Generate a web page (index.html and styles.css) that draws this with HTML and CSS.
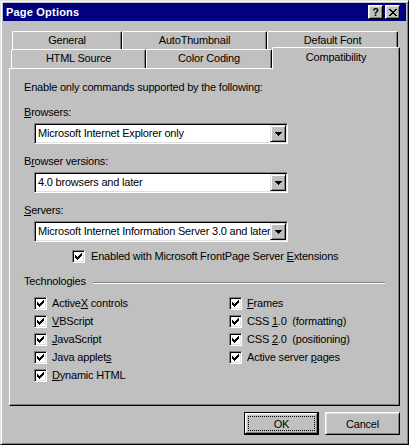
FILE: index.html
```html
<!DOCTYPE html>
<html>
<head>
    <title>Page Options</title>
    <link rel="stylesheet" href="styles.css">
</head>
<body>
<div class="window">
    <div class="title-bar">
        <span class="title">Page Options</span>
        <div class="title-buttons">
            <button class="title-btn help">?</button>
            <button class="title-btn close">
                <svg width="8" height="7" viewBox="0 0 8 7" shape-rendering="crispEdges">
                    <path d="M0 0h2v1h-2z M6 0h2v1h-2z M1 1h2v1h-2z M5 1h2v1h-2z M2 2h4v1h-4z M3 3h2v1h-2z M2 4h4v1h-4z M1 5h2v1h-2z M5 5h2v1h-2z M0 6h2v1h-2z M6 6h2v1h-2z" fill="#000"/>
                </svg>
            </button>
        </div>
    </div>

    <div class="dialog-body">
        <div class="tabs">
            <div class="tab-row back">
                <div class="tab tab-general">General</div>
                <div class="tab tab-thumb">AutoThumbnail</div>
                <div class="tab tab-font">Default Font</div>
            </div>
            <div class="tab-row front">
                <div class="tab tab-source">HTML Source</div>
                <div class="tab tab-color">Color Coding</div>
                <div class="tab tab-compat selected">Compatibility</div>
            </div>
        </div>

        <div class="panel">
            <p class="intro">Enable only commands supported by the following:</p>

            <div class="field-label"><u>B</u>rowsers:</div>
            <div class="select">
                <span class="select-value">Microsoft Internet Explorer only</span>
                <span class="select-arrow">
                    <svg width="7" height="4" viewBox="0 0 7 4" shape-rendering="crispEdges"><path d="M0 0h7v1h-1v1h-1v1h-1v1h-1v-1h-1v-1h-1v-1h-1z" fill="#000"/></svg>
                </span>
            </div>

            <div class="field-label">B<u>r</u>owser versions:</div>
            <div class="select">
                <span class="select-value">4.0 browsers and later</span>
                <span class="select-arrow">
                    <svg width="7" height="4" viewBox="0 0 7 4" shape-rendering="crispEdges"><path d="M0 0h7v1h-1v1h-1v1h-1v1h-1v-1h-1v-1h-1v-1h-1z" fill="#000"/></svg>
                </span>
            </div>

            <div class="field-label"><u>S</u>ervers:</div>
            <div class="select">
                <span class="select-value">Microsoft Internet Information Server 3.0 and later</span>
                <span class="select-arrow">
                    <svg width="7" height="4" viewBox="0 0 7 4" shape-rendering="crispEdges"><path d="M0 0h7v1h-1v1h-1v1h-1v1h-1v-1h-1v-1h-1v-1h-1z" fill="#000"/></svg>
                </span>
            </div>

            <div class="check server-ext">
                <span class="box checked"></span>
                <span>Enabled with Microsoft FrontPage Server <u>E</u>xtensions</span>
            </div>

            <div class="group-title">
                <span>Technologies</span>
                <span class="rule"></span>
            </div>

            <div class="tech-grid">
                <div class="check"><span class="box checked"></span><span>Active<u>X</u> controls</span></div>
                <div class="check"><span class="box checked"></span><span><u>V</u>BScript</span></div>
                <div class="check"><span class="box checked"></span><span><u>J</u>avaScript</span></div>
                <div class="check"><span class="box checked"></span><span>Java applet<u>s</u></span></div>
                <div class="check"><span class="box checked"></span><span><u>D</u>ynamic HTML</span></div>
                <div class="check"><span class="box checked"></span><span><u>F</u>rames</span></div>
                <div class="check"><span class="box checked"></span><span class="pre">CSS <u>1</u>.0  (formatting)</span></div>
                <div class="check"><span class="box checked"></span><span class="pre">CSS <u>2</u>.0  (positioning)</span></div>
                <div class="check"><span class="box checked"></span><span>Active server <u>p</u>ages</span></div>
            </div>
        </div>

        <div class="dialog-buttons">
            <button class="btn default"><span class="focus">OK</span></button>
            <button class="btn">Cancel</button>
        </div>
    </div>
</div>
</body>
</html>
```

FILE: styles.css
```css
* {
    margin: 0;
    padding: 0;
    box-sizing: border-box;
}

body {
    font-family: 'Liberation Sans', Arial, sans-serif;
    font-size: 11px;
    letter-spacing: -0.2px;
    color: #000;
    background: #c0c0c0;
}

.window {
    width: 409px;
    height: 445px;
    background: #c0c0c0;
    border: 1px solid;
    border-color: #dfdfdf #000 #000 #dfdfdf;
    box-shadow: inset 1px 1px #fff, inset -1px -1px #808080;
    padding: 2px;
    display: flex;
    flex-direction: column;
}

.title-bar {
    height: 18px;
    background: #000080;
    display: flex;
    align-items: center;
    padding: 0 6px 0 3px;
}

.title {
    flex: 1;
    color: #fff;
    font-weight: bold;
    font-size: 11px;
    letter-spacing: 0.2px;
}

.title-buttons {
    display: flex;
    gap: 2px;
}

.title-btn {
    width: 15px;
    height: 14px;
    background: #c0c0c0;
    border: 1px solid;
    border-color: #fff #000 #000 #fff;
    box-shadow: inset 1px 1px #dfdfdf, inset -1px -1px #808080;
    display: flex;
    align-items: center;
    justify-content: center;
    font-family: 'Liberation Sans', Arial, sans-serif;
    font-weight: bold;
    font-size: 11px;
    line-height: 12px;
    color: #000;
}

.dialog-body {
    flex: 1;
    display: flex;
    flex-direction: column;
    padding: 10px 6px 0 6px;
}

/* tabs */
.tab-row {
    display: flex;
}

.tab-row.back {
    height: 18px;
    margin-left: 3px;
}

.tab-row.front {
    height: 19px;
    margin-left: 2px;
}

.tab {
    height: 100%;
    background: #c0c0c0;
    border-top: 1px solid #fff;
    border-left: 1px solid #fff;
    border-right: 1px solid #000;
    border-radius: 2px 2px 0 0;
    box-shadow: inset -1px 0 #808080;
    text-align: center;
    line-height: 17px;
}

.tab-general { width: 110px; }
.tab-thumb { width: 145px; }
.tab-font { width: 131px; }
.tab-source { width: 135px; }
.tab-color { width: 126px; }
.tab-compat { width: 128px; }

.tab.selected {
    position: relative;
    z-index: 1;
    height: 22px;
    margin-top: -2px;
    line-height: 18px;
}

/* panel */
.panel {
    height: 338px;
    border: 1px solid;
    border-color: #fff #000 #000 #fff;
    box-shadow: inset -1px -1px #808080;
    padding: 12px 14px 0 14px;
}

.intro {
    line-height: 13px;
    margin-bottom: 12px;
}

.field-label {
    line-height: 13px;
    margin-top: 11px;
}

.intro + .field-label {
    margin-top: 0;
}

.select {
    width: 254px;
    height: 21px;
    margin: 4px 0 0 10px;
    background: #fff;
    border: 1px solid;
    border-color: #808080 #fff #fff #808080;
    box-shadow: inset 1px 1px #000, inset -1px -1px #dfdfdf;
    padding: 1px;
    display: flex;
}

.select-value {
    flex: 1;
    padding-left: 2px;
    line-height: 17px;
    white-space: nowrap;
    overflow: hidden;
}

.select-arrow {
    width: 16px;
    height: 17px;
    background: #c0c0c0;
    border: 1px solid;
    border-color: #dfdfdf #000 #000 #dfdfdf;
    box-shadow: inset 1px 1px #fff, inset -1px -1px #808080;
    display: flex;
    align-items: center;
    justify-content: center;
}

/* checkboxes */
.check {
    display: flex;
    align-items: center;
    gap: 5px;
    height: 13px;
    line-height: 13px;
}

.check.server-ext {
    margin: 8px 0 0 48px;
    gap: 6px;
}

.box {
    width: 13px;
    height: 13px;
    flex-shrink: 0;
    background: #fff;
    border: 1px solid;
    border-color: #808080 #fff #fff #808080;
    box-shadow: inset 1px 1px #000, inset -1px -1px #dfdfdf;
}

.box.checked {
    background: #fff url("data:image/svg+xml;utf8,<svg xmlns='http://www.w3.org/2000/svg' width='7' height='7' viewBox='0 0 7 7' shape-rendering='crispEdges'><path d='M0 2h1v3h-1z M1 3h1v3h-1z M2 4h1v3h-1z M3 3h1v3h-1z M4 2h1v3h-1z M5 1h1v3h-1z M6 0h1v3h-1z' fill='black'/></svg>") no-repeat 2px 2px;
}

.pre {
    white-space: pre;
}

.group-title {
    display: flex;
    align-items: center;
    gap: 8px;
    line-height: 13px;
    margin-top: 12px;
}

.rule {
    flex: 1;
    border-top: 1px solid #808080;
    border-bottom: 1px solid #fff;
    margin-top: 2px;
}

.tech-grid {
    display: grid;
    grid-auto-flow: column;
    grid-template-rows: repeat(5, 18px);
    grid-template-columns: 195px 1fr;
    margin: 9px 0 0 10px;
}

/* buttons */
.dialog-buttons {
    display: flex;
    justify-content: flex-end;
    gap: 6px;
    margin-top: 6px;
}

.btn {
    width: 75px;
    height: 23px;
    background: #c0c0c0;
    border: 1px solid;
    border-color: #fff #000 #000 #fff;
    box-shadow: inset 1px 1px #dfdfdf, inset -1px -1px #808080;
    font-family: 'Liberation Sans', Arial, sans-serif;
    font-size: 11px;
    letter-spacing: -0.2px;
    color: #000;
    display: flex;
    align-items: center;
    justify-content: center;
}

.btn.default {
    border-color: #000;
    box-shadow: inset -1px -1px #000, inset 1px 1px #fff, inset -2px -2px #808080, inset 2px 2px #dfdfdf;
    padding: 3px;
}

.focus {
    flex: 1;
    align-self: stretch;
    border: 1px dotted #000;
    display: flex;
    align-items: center;
    justify-content: center;
}
```
